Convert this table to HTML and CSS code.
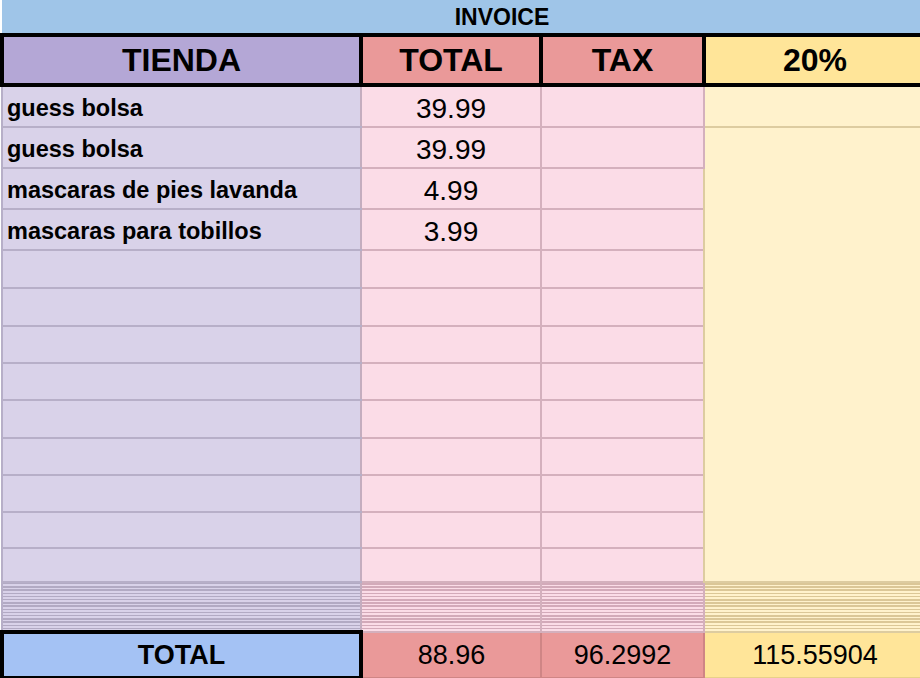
FILE: index.html
```html
<!DOCTYPE html>
<html lang="es">
<head>
<meta charset="utf-8">
<title>Invoice</title>
<link rel="stylesheet" href="styles.css">
</head>
<body>
<table class="sheet">
  <colgroup>
    <col class="c-store">
    <col class="c-total">
    <col class="c-tax">
    <col class="c-pct">
  </colgroup>
  <tr class="r-title"><td colspan="4" class="title">INVOICE</td></tr>
  <tr class="r-head">
    <th class="h-store">TIENDA</th>
    <th class="h-red">TOTAL</th>
    <th class="h-red">TAX</th>
    <th class="h-yellow">20%</th>
  </tr>
  <tr class="r-42"><td class="store">guess bolsa</td><td class="pink num">39.99</td><td class="pink"></td><td class="yellow"></td></tr>
  <tr class="r-41"><td class="store">guess bolsa</td><td class="pink num">39.99</td><td class="pink"></td><td class="yellow" rowspan="12"></td></tr>
  <tr class="r-41"><td class="store">mascaras de pies lavanda</td><td class="pink num">4.99</td><td class="pink"></td></tr>
  <tr class="r-41"><td class="store">mascaras para tobillos</td><td class="pink num">3.99</td><td class="pink"></td></tr>
  <tr class="r-38"><td class="store"></td><td class="pink"></td><td class="pink"></td></tr>
  <tr class="r-38"><td class="store"></td><td class="pink"></td><td class="pink"></td></tr>
  <tr class="r-37"><td class="store"></td><td class="pink"></td><td class="pink"></td></tr>
  <tr class="r-37"><td class="store"></td><td class="pink"></td><td class="pink"></td></tr>
  <tr class="r-38"><td class="store"></td><td class="pink"></td><td class="pink"></td></tr>
  <tr class="r-37"><td class="store"></td><td class="pink"></td><td class="pink"></td></tr>
  <tr class="r-37"><td class="store"></td><td class="pink"></td><td class="pink"></td></tr>
  <tr class="r-36"><td class="store"></td><td class="pink"></td><td class="pink"></td></tr>
  <tr class="r-34"><td class="store"></td><td class="pink"></td><td class="pink"></td></tr>
  <tr class="r-gap">
    <td class="store gap"></td><td class="pink gap"></td><td class="pink gap"></td><td class="yellow gap"></td>
  </tr>
  <tr class="r-total">
    <td class="t-store">TOTAL</td>
    <td class="t-red">88.96</td>
    <td class="t-red">96.2992</td>
    <td class="t-yellow">115.55904</td>
  </tr>
</table>
</body>
</html>
```
FILE: styles.css
```css
html, body {
  margin: 0;
  padding: 0;
  background: #ffffff;
}
body {
  width: 920px;
  height: 678px;
  overflow: hidden;
  font-family: "Liberation Sans", Arial, sans-serif;
  color: #000;
}
.sheet {
  border-collapse: collapse;
  table-layout: fixed;
  width: 924px;
}
.c-store { width: 359px; }
.c-total { width: 180px; }
.c-tax { width: 163px; }
.c-pct { width: 222px; }

td, th {
  padding: 0;
  overflow: hidden;
  white-space: nowrap;
}

/* title */
.r-title { height: 35px; }
.title {
  background: #9fc5e8;
  font-weight: bold;
  font-size: 23px;
  text-align: center;
  padding: 2px 0 0 76px;
  vertical-align: middle;
}

/* header */
.r-head { height: 50px; }
.r-head th {
  border: 4px solid #000;
  font-size: 32px;
  font-weight: bold;
  text-align: center;
  vertical-align: middle;
}
.h-store { background: #b4a7d6; }
.h-red { background: #ea9999; }
.h-yellow { background: #ffe599; }

/* data rows */
.r-42 { height: 42px; }
.r-41 { height: 41px; }
.r-38 { height: 38px; }
.r-37 { height: 37px; }
.r-36 { height: 36px; }
.r-34 { height: 34px; }

.store, .pink, .yellow {
  vertical-align: bottom;
}
.store {
  background-color: #d9d2e9;
  border: 2px solid #b7afc8;
  border-right-color: #c4adbf;
  font-weight: bold;
  font-size: 23.5px;
  padding: 0 0 4px 4px;
  text-align: left;
}
.pink {
  background-color: #fbdce7;
  border: 2px solid #d4b0bd;
}
.yellow {
  background-color: #fff2cc;
  border: 2px solid #ddcca0;
}
.num {
  font-size: 28px;
  text-align: center;
  padding-bottom: 1px;
}

/* compressed rows */
.r-gap { height: 50px; }
.store.gap {
  background-image: repeating-linear-gradient(to bottom,
    #b2aac3 0px, #b2aac3 1.5px, transparent 1.5px, transparent 3.2px);
}
.pink.gap {
  background-image: repeating-linear-gradient(to bottom,
    #d3aab9 0px, #d3aab9 1.5px, transparent 1.5px, transparent 3.2px);
}
.yellow.gap {
  background-image: repeating-linear-gradient(to bottom,
    #dbc797 0px, #dbc797 1.5px, transparent 1.5px, transparent 3.2px);
}

/* totals */
.r-total { height: 46px; }
.r-total td {
  font-size: 27px;
  text-align: center;
  vertical-align: middle;
}
.t-store {
  background: #a4c2f4;
  border: 4px solid #000;
  font-weight: bold;
}
.t-red {
  background: #ea9999;
  border: 2px solid #cf8585;
}
.t-yellow {
  background: #ffe599;
  border: 2px solid #e8d08a;
}
```
